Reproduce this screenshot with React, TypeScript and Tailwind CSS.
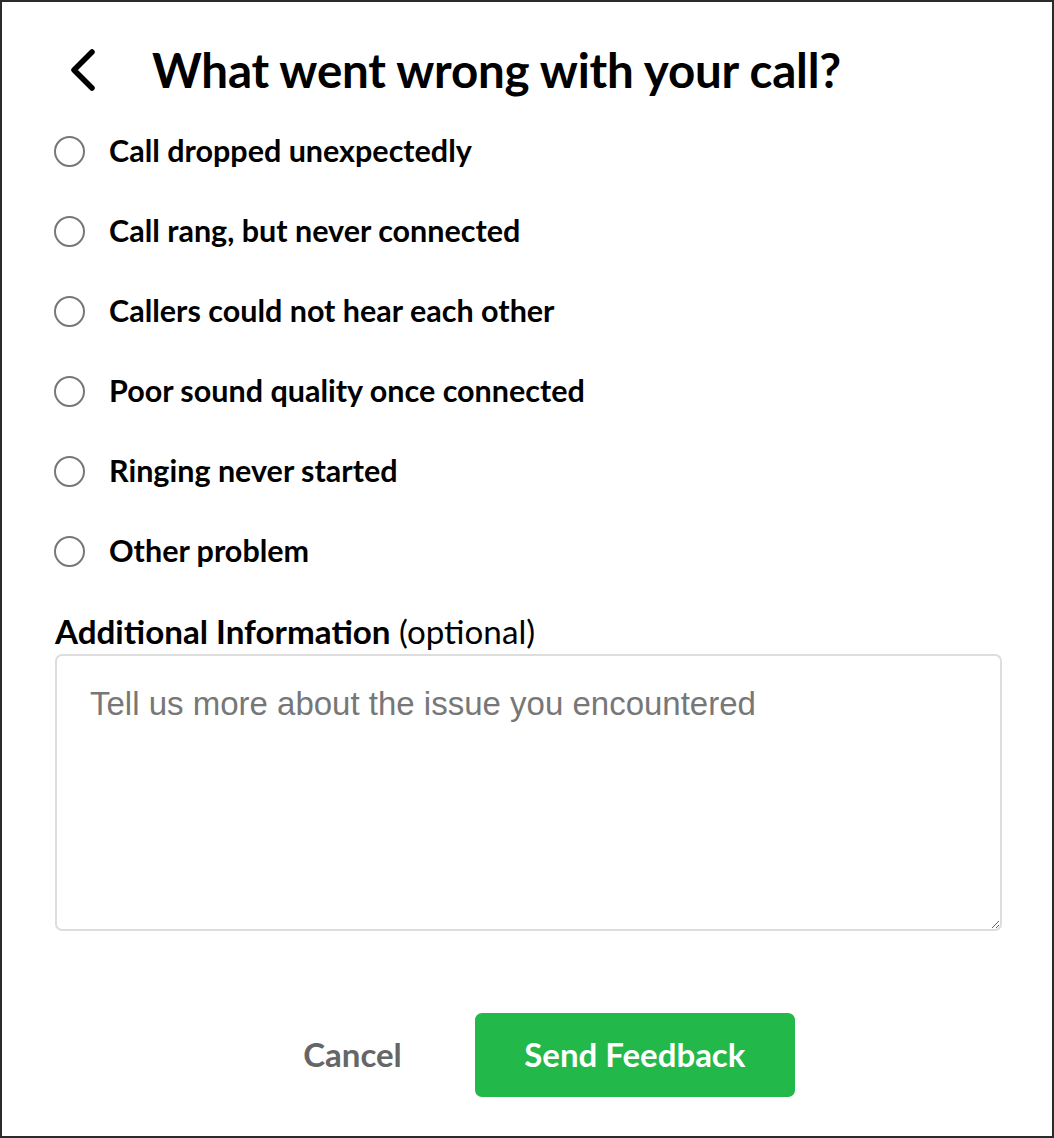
import React from "react";

const options = [
  "Call dropped unexpectedly",
  "Call rang, but never connected",
  "Callers could not hear each other",
  "Poor sound quality once connected",
  "Ringing never started",
  "Other problem",
];

export default function App() {
  return (
    <div className="w-[1054px] h-[1138px] bg-white border-2 border-[#2b2b2b] font-['Lato',sans-serif] text-black">
      <div className="flex items-center pl-[66px] pt-[40px]">
        <button type="button" className="w-[34px] h-[40px] flex items-center">
          <svg width="30" height="42" viewBox="0 0 30 42">
            <path
              d="M24 3 L6 21 L24 39"
              fill="none"
              stroke="black"
              strokeWidth="5.5"
              strokeLinecap="round"
              strokeLinejoin="round"
            />
          </svg>
        </button>
        <h1 className="ml-[50px] text-[47.5px] font-bold leading-[56px] tracking-[-0.2px]">
          What went wrong with your call?
        </h1>
      </div>

      <div className="flex flex-col pl-[52px] mt-[13px]">
        {options.map((item, index) => (
          <label key={index} className="flex items-center h-[80px] cursor-pointer">
            <span className="w-[31px] h-[31px] rounded-full border-2 border-[#777]" />
            <span className="ml-[24px] text-[30.5px] font-bold">{item}</span>
          </label>
        ))}
      </div>

      <div className="px-[53px] mt-[20px]">
        <div className="text-[33.2px] leading-[40px]">
          <span className="font-bold">Additional Information</span> (optional)
        </div>
        <textarea
          placeholder="Tell us more about the issue you encountered"
          className="mt-[3px] w-[947px] h-[277px] border-2 border-[#ddd] rounded-[7px] px-[33px] py-[26px] text-[33px] leading-[44px] font-['Liberation_Sans',Arial,sans-serif] placeholder:text-[#777] outline-none resize-y"
        />
      </div>

      <div className="flex items-center justify-center gap-[73px] mt-[76px] pl-[44px]">
        <button type="button" className="text-[33px] font-bold text-[#666]">
          Cancel
        </button>
        <button
          type="button"
          className="w-[320px] h-[84px] bg-[#22b84a] rounded-[7px] text-white text-[33px] font-bold"
        >
          Send Feedback
        </button>
      </div>
    </div>
  );
}
